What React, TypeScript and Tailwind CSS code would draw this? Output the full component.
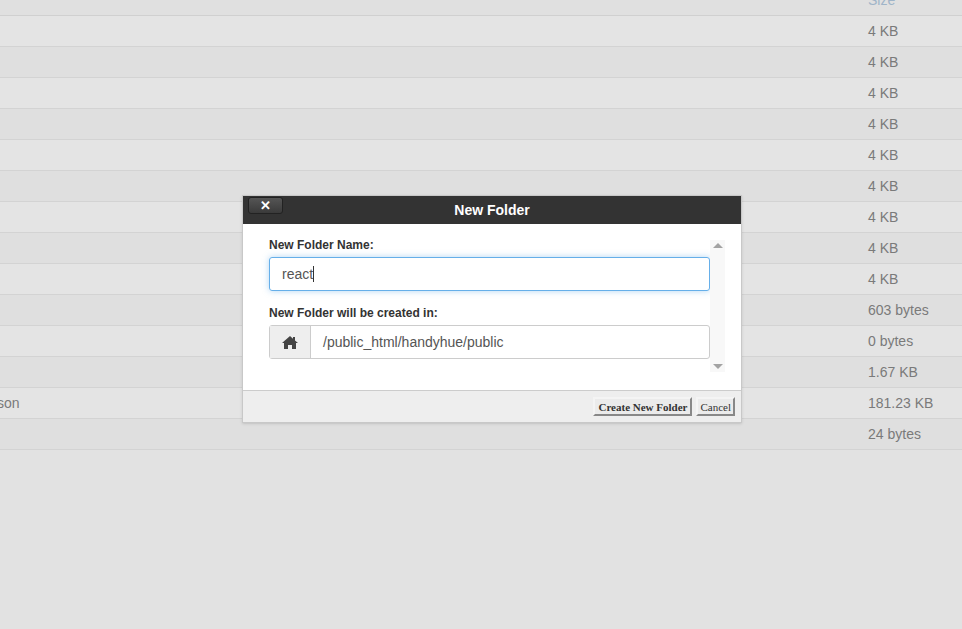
import React from "react";

const sizes = ["4 KB","4 KB","4 KB","4 KB","4 KB","4 KB","4 KB","4 KB","4 KB","603 bytes","0 bytes","1.67 KB","181.23 KB","24 bytes"];

export default function App() {
  return (
    <div className="relative w-[962px] h-[629px] bg-[#e2e2e2] overflow-hidden text-[14px] text-[#7a7a7a]" style={{ fontFamily: '"Liberation Sans", Arial, sans-serif' }}>
      <div className="h-[16px] border-b border-[#d0d0d0] bg-[#e0e0e0] overflow-hidden flex items-end">
        <span className="ml-[868px] mb-[8px] text-[#9fb4c8] leading-none">Size</span>
      </div>
      {sizes.map((s, i) => (
        <div key={i} className={`h-[31px] border-b border-[#d3d3d3] flex items-center ${i % 2 === 0 ? "bg-[#e4e4e4]" : "bg-[#dfdfdf]"}`}>
          <span className="w-[868px]">{i === 12 ? <span className="-ml-[3px]">son</span> : null}</span>
          <span>{s}</span>
        </div>
      ))}
      <div className="absolute left-[242px] top-[195px] w-[500px] h-[228px] bg-white border border-[#c8c8c8] shadow-sm flex flex-col">
        <div className="h-[28px] bg-[#333] relative flex items-center justify-center text-white font-bold text-[14px]">
          New Folder
          <div className="absolute left-[5px] top-[1px] w-[35px] h-[17px] rounded-[3px] bg-gradient-to-b from-[#555] to-[#3a3a3a] border border-[#222] flex items-center justify-center text-white text-[13px] leading-none">✕</div>
        </div>
        <div className="flex-1 relative pl-[26px] pr-[31px] pt-[12px]">
          <div className="text-[12px] font-bold text-[#333]">New Folder Name:</div>
          <div className="mt-[3px] h-[34px] border border-[#66afe9] rounded-[3px] shadow-[0_0_6px_rgba(102,175,233,0.5)] flex items-center pl-[12px] text-[#555]">react<span className="w-px h-[16px] bg-[#333]" /></div>
          <div className="mt-[13px] text-[12px] font-bold text-[#333]">New Folder will be created in:</div>
          <div className="mt-[3px] h-[34px] border border-[#ccc] rounded-[3px] flex">
            <div className="w-[41px] bg-[#eee] border-r border-[#ccc] flex items-center justify-center">
              <svg width="16" height="13" viewBox="0 0 16 13"><path d="M8 0L0 7h2v6h4V9h4v4h4V7h2L13 4.5V1h-2v1.8z" fill="#444"/></svg>
            </div>
            <div className="flex items-center pl-[12px] text-[#555]">/public_html/handyhue/public</div>
          </div>
          <div className="absolute right-[16px] top-[16px] w-[15px] h-[132px] bg-[#f8f8f8] flex flex-col justify-between items-center py-[3px]">
            <div className="w-0 h-0 border-l-[5px] border-r-[5px] border-b-[5px] border-l-transparent border-r-transparent border-b-[#a3a3a3]" />
            <div className="w-0 h-0 border-l-[5px] border-r-[5px] border-t-[5px] border-l-transparent border-r-transparent border-t-[#a3a3a3]" />
          </div>
        </div>
        <div className="h-[32px] bg-[#eee] border-t border-[#ccc] flex items-center justify-end gap-[4px] pr-[6px]">
          <button className="h-[19px] px-[3px] border-2 border-t-[#f4f4f4] border-l-[#f4f4f4] border-r-[#888] border-b-[#888] bg-[#ebebeb] text-[11px] font-bold text-[#333]" style={{ fontFamily: '"Liberation Serif", serif' }}>Create New Folder</button>
          <button className="h-[19px] px-[2px] border-2 border-t-[#f4f4f4] border-l-[#f4f4f4] border-r-[#888] border-b-[#888] bg-[#ebebeb] text-[11px] text-[#333]" style={{ fontFamily: '"Liberation Serif", serif' }}>Cancel</button>
        </div>
      </div>
    </div>
  );
}
